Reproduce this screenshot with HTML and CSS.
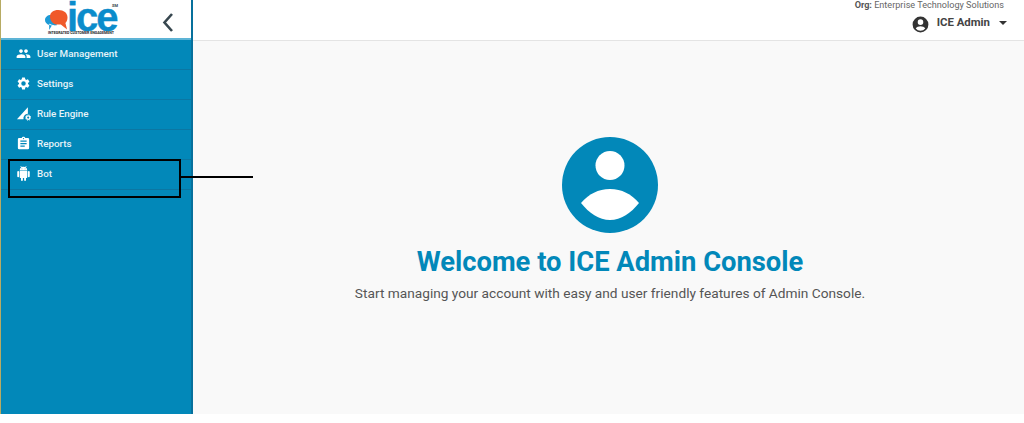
FILE: index.html
```html
<!DOCTYPE html>
<html lang="en">
<head>
<meta charset="utf-8">
<title>ICE Admin Console</title>
<link rel="stylesheet" href="styles.css">
</head>
<body>
<div class="app">
  <aside class="sidebar">
    <div class="brand">
      <div class="logo">
        <svg class="logo-bubbles" viewBox="0 0 30 26" width="30" height="26">
          <path d="M0 13c0-3.500 3-6 7-6h7v13H8l-3 5v-6c-3-1-5-3-5-6z" fill="#1c9ad6"/>
          <path d="M6 9c0-5 4-8 10-8 6.500 0 11 3.500 11 9 0 3-1 5-2.500 6.500l2 8-7.500-6h-4C10 18.500 6 14 6 9z" fill="#f0592a"/>
          <path d="M5 18c4 2 9 3 14 1.500" fill="none" stroke="#fff" stroke-width="1.200"/>
        </svg>
        <span class="logo-word">ice</span>
        <span class="logo-sm">SM</span>
        <span class="logo-tag">INTEGRATED CUSTOMER ENGAGEMENT</span>
      </div>
      <svg class="chevron" viewBox="0 0 14 20" width="14" height="20"><path d="M11 2 3.500 10.500 11 19" fill="none" stroke="#37474f" stroke-width="2.600"/></svg>
    </div>
    <nav class="menu">
      <a class="item">
        <svg class="icon" viewBox="0 0 24 24"><path d="M16 11c1.660 0 2.990-1.340 2.990-3S17.660 5 16 5s-3 1.340-3 3 1.340 3 3 3zm-8 0c1.660 0 2.990-1.340 2.990-3S9.660 5 8 5 5 6.340 5 8s1.340 3 3 3zm0 2c-2.330 0-7 1.170-7 3.500V19h14v-2.500C15 14.170 10.330 13 8 13zm8 0c-.290 0-.620.020-.970.050 1.160.840 1.970 1.970 1.970 3.450V19h6v-2.500c0-2.330-4.670-3.500-7-3.500z"/></svg>
        <span>User Management</span>
      </a>
      <a class="item">
        <svg class="icon" viewBox="0 0 24 24"><path d="M19.140 12.940c.040-.300.060-.610.060-.940s-.020-.640-.070-.940l2.030-1.580a.490.490 0 0 0 .120-.610l-1.920-3.320a.490.490 0 0 0-.590-.220l-2.390.960a7 7 0 0 0-1.620-.940l-.360-2.540a.480.480 0 0 0-.480-.410h-3.840a.470.470 0 0 0-.470.410l-.360 2.540c-.590.240-1.130.570-1.620.940l-2.390-.960a.480.480 0 0 0-.590.220L2.740 8.870a.480.480 0 0 0 .120.610l2.030 1.580c-.050.300-.090.630-.090.940s.020.640.070.940l-2.030 1.580a.490.490 0 0 0-.120.610l1.920 3.320c.120.220.370.290.590.220l2.390-.960c.500.380 1.030.700 1.620.940l.360 2.540c.050.240.240.410.480.410h3.840c.240 0 .440-.170.470-.410l.360-2.540c.590-.240 1.130-.560 1.620-.940l2.390.960c.220.080.470 0 .590-.220l1.920-3.320a.480.480 0 0 0-.120-.610l-2.010-1.580zM12 15.600A3.600 3.600 0 1 1 12 8.400a3.600 3.600 0 0 1 0 7.200z"/></svg>
        <span>Settings</span>
      </a>
      <a class="item">
        <svg class="icon" viewBox="0 0 24 24"><path d="M1.500 21 19 2v10.500A7 7 0 0 0 12 21z"/><circle cx="19.500" cy="18.500" r="2.800" fill="none" stroke="#fff" stroke-width="2.200"/><circle cx="19.500" cy="18.500" r="4.300" fill="none" stroke="#fff" stroke-width="1.400" stroke-dasharray="1.700 1.680"/></svg>
        <span>Rule Engine</span>
      </a>
      <a class="item">
        <svg class="icon" viewBox="0 0 24 24"><path d="M19 3h-4.180C14.400 1.840 13.300 1 12 1s-2.400.840-2.820 2H5a2 2 0 0 0-2 2v14a2 2 0 0 0 2 2h14a2 2 0 0 0 2-2V5a2 2 0 0 0-2-2zm-7 0a1 1 0 1 1 0 2 1 1 0 0 1 0-2zm2 14H7v-2h7v2zm3-4H7v-2h10v2zm0-4H7V7h10v2z"/></svg>
        <span>Reports</span>
      </a>
      <a class="item">
        <svg class="icon" viewBox="0 0 24 24"><path d="M6 18c0 .550.450 1 1 1h1v3.500a1.500 1.500 0 0 0 3 0V19h2v3.500a1.500 1.500 0 0 0 3 0V19h1c.550 0 1-.450 1-1V8H6v10zM3.500 8A1.500 1.500 0 0 0 2 9.500v7a1.500 1.500 0 0 0 3 0v-7A1.500 1.500 0 0 0 3.500 8zm17 0a1.500 1.500 0 0 0-1.500 1.500v7a1.500 1.500 0 0 0 3 0v-7A1.500 1.500 0 0 0 20.500 8zm-4.970-5.840 1.300-1.300a.5.500 0 0 0-.700-.700l-1.480 1.480A5.900 5.900 0 0 0 12 1c-.960 0-1.860.230-2.660.630L7.850.150a.5.500 0 0 0-.700.700l1.310 1.310A5.980 5.980 0 0 0 6 7h12a5.980 5.980 0 0 0-2.470-4.840zM10 5H9V4h1v1zm5 0h-1V4h1v1z"/></svg>
        <span>Bot</span>
      </a>
    </nav>
  </aside>
  <main class="main">
    <header class="topbar">
      <div class="org"><b>Org:</b> Enterprise Technology Solutions</div>
      <div class="user">
        <svg class="user-icon" viewBox="0 0 24 24" width="19" height="19"><path d="M12 2a10 10 0 1 0 0 20 10 10 0 0 0 0-20zm0 3.500a3.500 3.500 0 1 1 0 7 3.500 3.500 0 0 1 0-7zm0 14.300a7.600 7.600 0 0 1-6-2.900c.900-1.700 3.800-2.700 6-2.700s5.100 1 6 2.700a7.600 7.600 0 0 1-6 2.900z"/></svg>
        <span class="user-name">ICE Admin</span>
        <span class="caret"></span>
      </div>
    </header>
    <section class="welcome">
      <svg class="avatar" viewBox="0 0 96 96" width="96" height="96">
        <circle cx="48" cy="48" r="48" fill="#0288b9"/>
        <circle cx="48" cy="28.500" r="14.500" fill="#fff"/>
        <path d="M19 66C27 57 36 52 48 52s21 5 29 14c-8 10-18 17-29 17S27 76 19 66z" fill="#fff"/>
      </svg>
      <h1 class="title">Welcome to ICE Admin Console</h1>
      <p class="subtitle">Start managing your account with easy and user friendly features of Admin Console.</p>
    </section>
  </main>
</div>
<div class="callout"><span class="callout-line"></span></div>
</body>
</html>
```

FILE: styles.css
```css
* { box-sizing: border-box; }
html, body { margin: 0; padding: 0; background: #fff; }
body { font-family: Roboto, "Liberation Sans", sans-serif; overflow: hidden; height: 423px; position: relative; }

.app { display: flex; height: 414px; }

.sidebar {
  width: 193px;
  flex: none;
  background: #0288b9;
  border-left: 1px solid #b7ab63;
  border-right: 2px solid #07709c;
}
.brand {
  height: 40px;
  background: #fff;
  border-bottom: 2px solid #5db4d6;
  display: flex;
  align-items: center;
  padding: 0 16px 0 44px;
  justify-content: space-between;
}
.logo { position: relative; width: 74px; height: 38px; }
.logo-bubbles { position: absolute; left: 0; top: 9px; width: 25px; height: 22px; }
.logo-word {
  position: absolute;
  left: 22px;
  top: 0;
  font-family: "Liberation Sans", sans-serif;
  font-weight: 700;
  font-size: 40px;
  line-height: 34px;
  letter-spacing: -2px;
  color: #0a8ccb;
  -webkit-text-stroke: 0.4px #0a8ccb;
}
.logo-sm {
  position: absolute;
  left: 67px;
  top: 4px;
  font-size: 4px;
  font-weight: 700;
  line-height: 4px;
  color: #37474f;
}
.logo-tag {
  position: absolute;
  left: 3px;
  top: 31px;
  font-size: 3.600px;
  font-weight: 700;
  line-height: 4px;
  white-space: nowrap;
  color: #222;
}
.chevron { display: block; margin-top: 6px; }

.menu { display: flex; flex-direction: column; }
.item {
  height: 30px;
  display: flex;
  align-items: center;
  gap: 6px;
  padding: 0 0 3px 15px;
  border-bottom: 1px solid #0b77a3;
  color: #e6f3f8;
  font-size: 9.800px;
  font-weight: 500;
}
.icon { width: 15px; height: 15px; fill: #fff; flex: none; }

.main { flex: 1; display: flex; flex-direction: column; background: #f9f9f9; min-width: 0; }
.topbar {
  height: 41px;
  flex: none;
  background: #fff;
  border-bottom: 1px solid #e4e4e4;
  padding: 0 17px 0 0;
  display: flex;
  flex-direction: column;
  align-items: flex-end;
}
.org { font-size: 9.100px; line-height: 11px; color: #666; white-space: nowrap; margin-right: 3px; }
.org b { font-weight: 700; color: #555; }
.user { display: flex; align-items: center; margin-top: 2px; height: 20px; }
.user-icon { fill: #333; margin: 2px 7px 0 0; }
.user-name { font-size: 11.400px; font-weight: 700; color: #444; margin-top: -3px; }
.caret {
  width: 0;
  height: 0;
  margin-left: 9px;
  margin-top: -1px;
  border-left: 4px solid transparent;
  border-right: 4px solid transparent;
  border-top: 4px solid #333;
}

.welcome {
  flex: 1;
  display: flex;
  flex-direction: column;
  align-items: center;
  padding: 96px 0 0 3px;
}
.avatar { display: block; }
.title {
  margin: 13px 0 0;
  font-size: 27.350px;
  line-height: 32px;
  font-weight: 700;
  color: #0288b9;
}
.subtitle {
  margin: 5px 0 0;
  font-size: 13.700px;
  line-height: 20px;
  color: #555;
}

.callout {
  position: absolute;
  left: 8px;
  top: 159px;
  width: 173px;
  height: 39px;
  border: 2px solid #000;
}
.callout-line {
  position: absolute;
  left: 171px;
  top: 15px;
  width: 72px;
  height: 2px;
  background: #000;
}
```
